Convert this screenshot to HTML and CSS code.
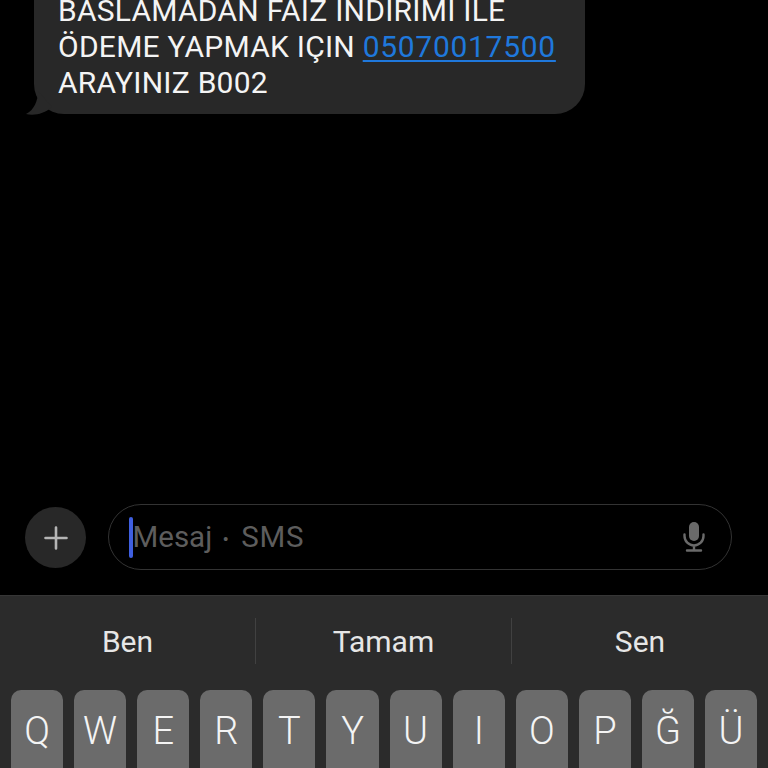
FILE: index.html
```html
<!DOCTYPE html>
<html lang="tr">
<head>
<meta charset="utf-8">
<title>Mesaj</title>
<link rel="stylesheet" href="styles.css">
</head>
<body>
<main class="screen">
  <section class="thread">
    <div class="bubble">
      <svg class="tail" viewBox="0 0 26 24" width="26" height="24"><path d="M12 0 C12 10 8 19 0 23 C8 25 18 23 26 16 Z" fill="#282828"/></svg>
      <p class="line">BASLAMADAN FAIZ INDIRIMI ILE</p>
      <p class="line">ÖDEME YAPMAK IÇIN <a class="link" href="#">05070017500</a></p>
      <p class="line">ARAYINIZ B002</p>
    </div>
  </section>
  <section class="composer">
    <div class="plus">
      <svg viewBox="0 0 24 24" width="24" height="24"><path d="M12 1.5V22.5M1.5 12H22.5" stroke="#b5b5b5" stroke-width="2.6" stroke-linecap="round" fill="none"/></svg>
    </div>
    <div class="field">
      <span class="caret"></span>
      <span class="placeholder">Mesaj <span class="dot">•</span> <span class="sms">SMS</span></span>
      <svg class="mic" viewBox="0 0 22 30" width="22" height="30"><rect x="6" y="0" width="10" height="19" rx="5" fill="#6a6a6a"/><path d="M1.5 12.5V14a9.5 9.5 0 0 0 19 0V12.5M11 23.5V28M4 28.5H18" stroke="#6a6a6a" stroke-width="2.4" stroke-linecap="round" fill="none"/></svg>
    </div>
  </section>
  <section class="keyboard">
    <div class="suggestions">
      <span class="suggestion">Ben</span>
      <span class="suggestion">Tamam</span>
      <span class="suggestion">Sen</span>
    </div>
    <div class="keys">
      <span class="key">Q</span><span class="key">W</span><span class="key">E</span><span class="key">R</span><span class="key">T</span><span class="key">Y</span><span class="key">U</span><span class="key">I</span><span class="key">O</span><span class="key">P</span><span class="key">Ğ</span><span class="key">Ü</span>
    </div>
  </section>
</main>
</body>
</html>
```
FILE: styles.css
```css
* { box-sizing: border-box; }
html, body { margin: 0; padding: 0; background: #000; }
body { width: 768px; height: 768px; overflow: hidden; font-family: Roboto, "Liberation Sans", Arial, sans-serif; }
.screen { width: 768px; height: 768px; display: flex; flex-direction: column; overflow: hidden; }

.thread { height: 504px; flex: none; padding-left: 34px; }
.bubble {
  position: relative;
  width: 551px;
  height: 150px;
  margin-top: -36px;
  padding: 29px 0 0 24px;
  background: #282828;
  border-radius: 30px;
}
.tail { position: absolute; left: -8px; bottom: -1px; }
.line { margin: 0; color: #f4f4f4; font-size: 30px; line-height: 36px; letter-spacing: 0.25px; white-space: nowrap; }
.link { color: #1f78dc; letter-spacing: 0.7px; text-decoration: underline; text-decoration-thickness: 2px; text-underline-offset: 3px; }

.composer { height: 91px; flex: none; display: flex; align-items: flex-start; padding-left: 25px; gap: 22px; }
.plus { width: 61px; height: 61px; margin-top: 3px; border-radius: 50%; background: #282828; display: flex; align-items: center; justify-content: center; }
.field {
  width: 624px;
  height: 66px;
  border: 1.5px solid #333;
  border-radius: 33px;
  display: flex;
  align-items: center;
  padding: 0 26px 0 20px;
}
.caret { width: 4px; height: 41px; background: #3f5fe0; border-radius: 2px; flex: none; }
.placeholder { flex: 1; color: #5d5d5d; font-size: 29.5px; margin-left: -0.5px; }
.dot { font-size: 19px; margin: 0 4px 0 3px; vertical-align: 1px; }
.sms { letter-spacing: 0.7px; margin-left: 1px; }
.mic { flex: none; }

.keyboard { flex: 1; background: #2b2b2b; border-top: 1px solid #363636; }
.suggestions { display: grid; grid-template-columns: 256px 256px 256px; padding-top: 22px; height: 94px; }
.suggestion {
  height: 46px;
  display: flex;
  align-items: center;
  justify-content: center;
  color: #e6e6e6;
  font-size: 30px;
  border-right: 1px solid #414141;
}
.suggestion:last-child { border-right: 0; }
.keys { display: grid; grid-template-columns: repeat(12, 52.1px); column-gap: 11px; padding-left: 11px; }
.key {
  height: 90px;
  padding-top: 17px;
  text-align: center;
  border-radius: 10px;
  background: #6b6b6b;
  color: #f4f4f4;
  font-size: 38px;
  font-weight: 300;
  line-height: 48px;
}
```
